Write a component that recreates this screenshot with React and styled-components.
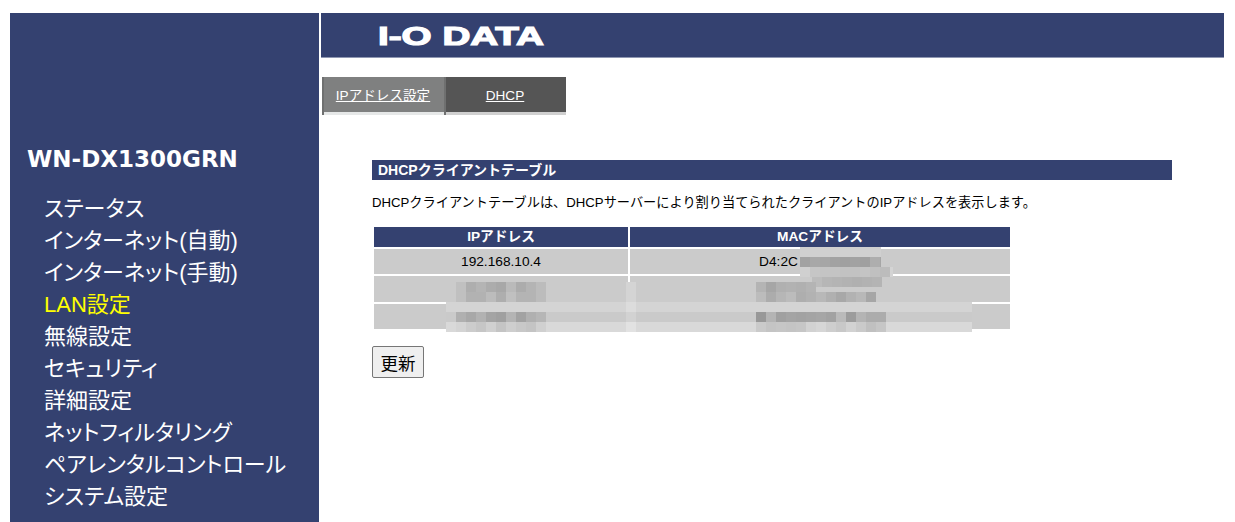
import React from 'react';
import styled, { createGlobalStyle } from 'styled-components';

const NAVY = '#344170';
const CJK = '"Liberation Sans", "Noto Sans CJK JP", sans-serif';

const GlobalStyle = createGlobalStyle`
  html, body {
    margin: 0;
    height: 522px;
    overflow: hidden;
    background: #fff;
    font-family: ${CJK};
  }
`;

const Page = styled.div`
  display: flex;
  gap: 2px;
  height: 509px;
  padding: 13px 11px 0 10px;
`;

const Sidebar = styled.nav`
  width: 309px;
  flex: none;
  box-sizing: border-box;
  padding: 132px 0 0 17px;
  background: ${NAVY};
  color: #fff;
`;

const Model = styled.h1`
  margin: 0 0 20px;
  font: bold 23px/28px "DejaVu Sans", sans-serif;
`;

const Menu = styled.ul`
  margin: 0;
  padding: 0 0 0 17px;
  list-style: none;
`;

const MenuItem = styled.li`
  height: 32px;
  font-size: 22px;
  font-feature-settings: "palt";
  line-height: 32px;
  white-space: nowrap;
  color: ${(p) => (p.$active ? '#ffff00' : '#fff')};
`;

const Main = styled.main`
  flex: 1;
  min-width: 0;
`;

const Banner = styled.header`
  display: flex;
  align-items: center;
  height: 44px;
  padding-left: 57px;
  background: ${NAVY};
  border-bottom: 1px solid #8f97b2;
`;

const Logo = styled.svg`
  width: 260px;
  height: 36px;
`;

const LogoText = styled.text`
  font: 900 26px "Liberation Sans", sans-serif;
  fill: #fff;
  stroke: #fff;
  stroke-width: 1.2;
`;

const Tabs = styled.div`
  display: flex;
  margin: 19px 0 0 1px;
`;

const Tab = styled.a`
  box-sizing: border-box;
  width: ${(p) => p.$width}px;
  height: 38px;
  padding: 8px 2px 0 0;
  text-align: center;
  font-size: 13.6px;
  line-height: 22px;
  color: #fff;
  text-decoration: underline;
  background: linear-gradient(
    ${(p) => (p.$current ? '#7f8080, #7f8080' : '#555, #555')}
  );
  background-size: 100% 35px;
  background-repeat: no-repeat;
  background-color: ${(p) => (p.$current ? '#e6e8e8' : '#d0d0d0')};
  border-left: ${(p) => (p.$current ? '2px solid #6f7070' : '0')};
  border-right: ${(p) => (p.$current ? '2px solid #6f7070' : '0')};
`;

const Content = styled.section`
  padding: 45px 0 0 51px;
`;

const SectionTitle = styled.h2`
  box-sizing: border-box;
  width: 800px;
  height: 20px;
  margin: 0;
  padding-left: 6px;
  background: ${NAVY};
  color: #fff;
  font-size: 14px;
  font-weight: bold;
  line-height: 20px;
`;

const Description = styled.p`
  margin: 14px 0 13px;
  font-size: 13.2px;
  line-height: 18px;
  color: #000;
`;

const TableWrap = styled.div`
  position: relative;
  width: 640px;
`;

const ClientTable = styled.table`
  width: 640px;
  table-layout: fixed;
  border-collapse: separate;
  border-spacing: 2px;
`;

const Head = styled.th`
  height: 20px;
  padding: 0;
  background: ${NAVY};
  color: #fff;
  font-size: 13.7px;
  font-weight: bold;
  line-height: 20px;
`;

const Cell = styled.td`
  height: ${(p) => p.$height}px;
  padding: 0;
  background: #cbcbcb;
  text-align: center;
  font-size: 13.7px;
  color: #000;
`;

const MacText = styled.span`
  display: block;
  margin-left: -83px;
`;

const Mosaic = styled.div`
  position: absolute;
  left: ${(p) => p.$x}px;
  top: ${(p) => p.$y}px;
  width: ${(p) => p.$w}px;
  height: 10px;
  display: flex;
  overflow: hidden;
  background: ${(p) => p.$bg};
`;

const Pixel = styled.i`
  width: 10px;
  height: 10px;
  flex: none;
  background: ${(p) => p.$c};
`;

const UpdateButton = styled.button`
  display: block;
  box-sizing: border-box;
  width: 52px;
  height: 32px;
  margin-top: 15px;
  padding: 0;
  border: 1px solid #767676;
  border-radius: 2px;
  background: #efefef;
  font: 17.5px ${CJK};
  color: #000;
`;

const items = [
  'ステータス',
  'インターネット(自動)',
  'インターネット(手動)',
  'LAN設定',
  '無線設定',
  'セキュリティ',
  '詳細設定',
  'ネットフィルタリング',
  'ペアレンタルコントロール',
  'システム設定',
];

// blurred-out addresses, coordinates relative to the table
const g = (s) => s.split(' ').map((v) => `#${v}${v}${v}`);
const patches = [
  { x: 428, y: 22, w: 81, bg: '#d0d0d0', px: [] },
  { x: 428, y: 32, w: 81, bg: '#aaa', px: g('a2 a8 a6 a2 a0 a2 a0 ae a6') },
  { x: 428, y: 42, w: 93, bg: '#d4d4d4', px: g('d0 c6 c4 c4 c2 c2 c4 c0 bc') },
  { x: 440, y: 52, w: 70, bg: '#b4b4b4', px: g('bc b6 b4 b2 b0 b2 b4 bc') },
  { x: 84, y: 57, w: 90, bg: '#b4b4b4', px: g('c0 ae b4 ac a8 ba ac b4 bc') },
  { x: 84, y: 67, w: 90, bg: '#b8b8b8', px: g('c0 b2 b2 bc ae c0 b4 b4 bc') },
  { x: 254, y: 57, w: 10, bg: '#d4d4d4', px: [] },
  { x: 254, y: 67, w: 10, bg: '#d4d4d4', px: [] },
  { x: 384, y: 57, w: 60, bg: '#b0b0b0', px: g('b4 a6 b0 b2 b0 b4') },
  { x: 384, y: 67, w: 120, bg: '#b8b8b8', px: g('bc ac b6 bc ae b2 b8 b0 a8 b2 b8 a6') },
  { x: 74, y: 77, w: 526, bg: '#d4d4d4', px: [] },
  { x: 74, y: 87, w: 526, bg: '#cacaca', px: [] },
  { x: 84, y: 87, w: 90, bg: '#a8a8a8', px: g('b0 a8 b2 a4 a0 b4 a2 b0 b6') },
  { x: 384, y: 87, w: 130, bg: '#a6a6a6', px: g('98 b4 a0 a4 a2 a4 a6 a2 ba 9c b4 ac ac') },
  { x: 74, y: 97, w: 526, bg: '#d9d9d9', px: [] },
  { x: 84, y: 97, w: 90, bg: '#c8c8c8', px: g('d4 cc c6 d0 c4 ce c8 c4 d0') },
  { x: 384, y: 97, w: 130, bg: '#c8c8c8', px: g('ca c4 c6 c4 c6 d2 d6 ce c8 d2 ca c0 c6') },
  { x: 254, y: 77, w: 10, bg: '#dcdcdc', px: [] },
  { x: 254, y: 87, w: 10, bg: '#d2d2d2', px: [] },
  { x: 254, y: 97, w: 10, bg: '#e2e2e2', px: [] },
];

const App = () => {
  return (
    <>
      <GlobalStyle />
      <Page>
        <Sidebar>
          <Model>WN-DX1300GRN</Model>
          <Menu>
            {items.map((item) => (
              <MenuItem key={item} $active={item === 'LAN設定'}>
                {item}
              </MenuItem>
            ))}
          </Menu>
        </Sidebar>
        <Main>
          <Banner>
            <Logo viewBox="0 0 260 36">
              <LogoText x="0" y="28" textLength="166" lengthAdjust="spacingAndGlyphs">
                I-O DATA
              </LogoText>
            </Logo>
          </Banner>
          <Tabs>
            <Tab $current $width={124}>IPアドレス設定</Tab>
            <Tab $width={120}>DHCP</Tab>
          </Tabs>
          <Content>
            <SectionTitle>DHCPクライアントテーブル</SectionTitle>
            <Description>
              DHCPクライアントテーブルは、DHCPサーバーにより割り当てられたクライアントのIPアドレスを表示します。
            </Description>
            <TableWrap>
              <ClientTable>
                <colgroup>
                  <col width="254" />
                  <col width="380" />
                </colgroup>
                <thead>
                  <tr>
                    <Head>IPアドレス</Head>
                    <Head>MACアドレス</Head>
                  </tr>
                </thead>
                <tbody>
                  <tr>
                    <Cell $height={25}>192.168.10.4</Cell>
                    <Cell $height={25}>
                      <MacText>D4:2C</MacText>
                    </Cell>
                  </tr>
                  <tr>
                    <Cell $height={26} />
                    <Cell $height={26} />
                  </tr>
                  <tr>
                    <Cell $height={25} />
                    <Cell $height={25} />
                  </tr>
                </tbody>
              </ClientTable>
              {patches.map((p, i) => (
                <Mosaic key={i} $x={p.x} $y={p.y} $w={p.w} $bg={p.bg}>
                  {p.px.map((c, j) => (
                    <Pixel key={j} $c={c} />
                  ))}
                </Mosaic>
              ))}
            </TableWrap>
            <UpdateButton>更新</UpdateButton>
          </Content>
        </Main>
      </Page>
    </>
  );
};

export default App;
